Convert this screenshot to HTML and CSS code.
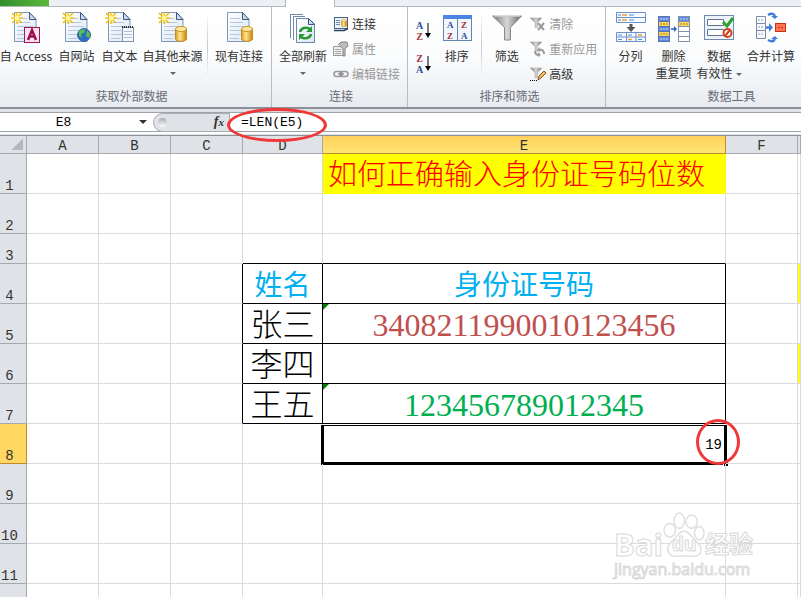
FILE: index.html
```html
<!DOCTYPE html>
<html lang="zh-CN">
<head>
    <meta charset="UTF-8">
    <meta name="viewport" content="width=device-width, initial-scale=1.0">
    <title>Excel</title>
    <link rel="stylesheet" href="styles.css">
</head>
<body>
    <!-- shared icon parts -->
    <svg class="defs" width="0" height="0">
        <defs>
            <linearGradient id="paper" x1="0" y1="0" x2="1" y2="1"><stop offset="0" stop-color="#fff"/><stop offset="1" stop-color="#dbe6f4"/></linearGradient>
            <linearGradient id="gold" x1="0" x2="1"><stop offset="0" stop-color="#d99a1c"/><stop offset=".4" stop-color="#ffe68a"/><stop offset="1" stop-color="#c98208"/></linearGradient>
            <linearGradient id="steel" x1="0" x2="1"><stop offset="0" stop-color="#777"/><stop offset=".5" stop-color="#d8d8d8"/><stop offset="1" stop-color="#666"/></linearGradient>
            <symbol id="page" viewBox="0 0 32 32">
                <path d="M4.5 1.5H19.5L26 8.5V30.5H4.5Z" fill="url(#paper)" stroke="#7f97b8"/>
                <path d="M19.5 1.5V8.5H26Z" fill="#c9dbf2" stroke="#3f5878"/>
                <path d="M7 7.5h10M7 11.5h13M7 15.5h16M7 19.5h16M7 23.5h16M7 27.5h9" stroke="#b4c7e0"/>
            </symbol>
            <symbol id="star" viewBox="0 0 12 12">
                <path d="M6 0v12M0 6h12M1 1l10 10M11 1L1 11" stroke="#f2c200" stroke-width="1.5"/>
                <circle cx="6" cy="6" r="2.5" fill="#fff6a0"/>
            </symbol>
            <symbol id="drum" viewBox="0 0 12 16">
                <path d="M.5 3v10c0 3 11 3 11 0V3Z" fill="url(#gold)" stroke="#c98d1c"/>
                <ellipse cx="6" cy="3" rx="5.5" ry="2.5" fill="#ffeaa0" stroke="#c9962c"/>
            </symbol>
            <symbol id="funnel" viewBox="0 0 30 26">
                <path d="M.5 1.5H29.5L18.5 13V25.5H12.5V13Z" fill="url(#steel)" stroke="#8a8a8a"/>
                <path d="M2 1.5H28" stroke="#eee"/>
            </symbol>
        </defs>
    </svg>

    <nav class="tabs">
        <span class="file-tab"></span>
        <span class="active-tab"></span>
    </nav>

    <div class="ribbon">
        <section class="group group-external">
            <div class="tools">
                <button class="tool access">
                    <svg viewBox="0 0 32 32"><use href="#page"/><use href="#star" x="1" y="1" width="12" height="12"/><rect x="14.5" y="16.5" width="15" height="15" fill="#fbe3ee" stroke="#a4145a"/><path d="M18 29l4-10 4 10M19.5 25.5h5" fill="none" stroke="#9b0f50" stroke-width="2.5"/></svg>
                    <span>自 Access</span>
                </button>
                <button class="tool narrow">
                    <svg viewBox="0 0 32 32"><use href="#page"/><use href="#star" x="1" y="1" width="12" height="12"/><circle cx="23" cy="24" r="6.5" fill="#2b6cc4" stroke="#3d6cac"/><path d="M18 20q4-3 6-1l-1 3-3 1 1 4-3-2ZM26 19l3 4-1 4-3-2Z" fill="#5cc04a"/></svg>
                    <span>自网站</span>
                </button>
                <button class="tool narrow">
                    <svg viewBox="0 0 32 32"><use href="#page"/><use href="#star" x="1" y="1" width="12" height="12"/><rect x="18.5" y="16.5" width="11" height="14" fill="#f5f8fc" stroke="#8190a5"/><path d="M18 16h12" stroke="#333" stroke-width="2" stroke-dasharray="1 1"/><path d="M20 20.5h8M20 23.5h8M20 26.5h8" stroke="#a9bedb"/></svg>
                    <span>自文本</span>
                </button>
                <button class="tool wide">
                    <svg viewBox="0 0 32 32"><use href="#page"/><use href="#star" x="1" y="1" width="12" height="12"/><use href="#drum" x="18" y="15" width="12" height="16"/></svg>
                    <span>自其他来源</span>
                    <i class="arrow"></i>
                </button>
                <span class="divider"></span>
                <button class="tool">
                    <svg viewBox="0 0 32 32"><use href="#page"/><use href="#drum" x="18" y="15" width="12" height="16"/></svg>
                    <span>现有连接</span>
                </button>
            </div>
            <h2>获取外部数据</h2>
        </section>

        <section class="group group-connect">
            <div class="tools">
                <button class="tool">
                    <svg viewBox="0 0 32 32"><path d="M3.5 27V3.5H16" fill="#fff" stroke="#6f87a8"/><path d="M6.5 29V5.500H18" fill="#fff" stroke="#6f87a8"/><path d="M9.5 7.5h12l6 5.5v18.5h-18Z" fill="url(#paper)" stroke="#6f87a8"/><path d="M21.5 7.5v6h6Z" fill="#c9dbf2" stroke="#3f5878"/><path d="M13 21a6 5 0 0 1 10-3M24 23a6 5 0 0 1-10 3" fill="none" stroke="#279a35" stroke-width="2.5"/><path d="M25 15v6h-6ZM12 29v-6h6Z" fill="#279a35"/></svg>
                    <span>全部刷新</span>
                    <i class="arrow"></i>
                </button>
                <div class="small-tools">
                    <button class="small-tool">
                        <svg viewBox="0 0 16 16"><rect x="1.5" y="1.5" width="13" height="11" fill="#eaf2fc" stroke="#466287"/><path d="M3 4.5h4M3 6.5h4M3 8.5h4" stroke="#6b8fc0"/><use href="#drum" x="8" y="3" width="6" height="8"/><path d="M1 14.5h10l4-2" fill="none" stroke="#29405f" stroke-width="1.5"/></svg>
                        连接
                    </button>
                    <button class="small-tool" disabled>
                        <svg viewBox="0 0 16 16"><path d="M.5 5.500h11v9h-11Z" fill="#eee" stroke="#999"/><path d="M2 8.5h6M2 10.5h6M2 12.5h6" stroke="#aaa"/><path d="M5 4l3-3h6l1 4-3 3v7h-2V8L7 5" fill="#bbb" stroke="#888"/></svg>
                        属性
                    </button>
                    <button class="small-tool" disabled>
                        <svg viewBox="0 0 16 16"><rect x="1" y="5.5" width="8" height="5" rx="2.5" fill="none" stroke="#999" stroke-width="1.5"/><rect x="7" y="5.5" width="8" height="5" rx="2.5" fill="none" stroke="#999" stroke-width="1.5"/><path d="M5 8h6" stroke="#777"/></svg>
                        编辑链接
                    </button>
                </div>
            </div>
            <h2>连接</h2>
        </section>

        <section class="group group-sort">
            <div class="tools">
                <div class="order-tools">
                    <button class="order" aria-label="升序">
                        <span class="letters"><b class="blue">A</b><b class="red">Z</b></span>
                        <svg viewBox="0 0 6 16"><path d="M3 0v13" stroke="#000"/><path d="M0 10h6l-3 5Z"/></svg>
                    </button>
                    <button class="order" aria-label="降序">
                        <span class="letters"><b class="red">Z</b><b class="blue">A</b></span>
                        <svg viewBox="0 0 6 16"><path d="M3 0v13" stroke="#000"/><path d="M0 10h6l-3 5Z"/></svg>
                    </button>
                </div>
                <button class="tool narrow">
                    <svg class="letters-icon" viewBox="0 0 32 32"><rect x="2.5" y="4.5" width="28" height="25" fill="#f2f7fd" stroke="#6683ab"/><rect x="2" y="4" width="29" height="4" fill="#4c86e4"/><path d="M16.5 8v21" stroke="#6683ab"/><text x="6" y="17" fill="#2f4d9b">A</text><text x="6" y="28" fill="#a3303b">Z</text><text x="20" y="17" fill="#a3303b">Z</text><text x="20" y="28" fill="#2f4d9b">A</text></svg>
                    <span>排序</span>
                </button>
                <span class="divider"></span>
                <button class="tool narrow">
                    <svg viewBox="0 0 32 32"><use href="#funnel" x="1" y="3" width="30" height="27"/></svg>
                    <span>筛选</span>
                </button>
                <div class="small-tools">
                    <button class="small-tool" disabled>
                        <svg viewBox="0 0 16 16"><use href="#funnel" x="0" y="1" width="12" height="11"/><path d="M8 7l6 7M14 7l-6 7" stroke="#999" stroke-width="2"/></svg>
                        清除
                    </button>
                    <button class="small-tool" disabled>
                        <svg viewBox="0 0 16 16"><use href="#funnel" x="0" y="0" width="12" height="11"/><path d="M5 10q0 4 4 4M14 13q0-5-5-4" fill="none" stroke="#999" stroke-width="2"/><path d="M8 11l3 3-3 2ZM10 6v5l-3-2Z" fill="#999"/></svg>
                        重新应用
                    </button>
                    <button class="small-tool">
                        <svg viewBox="0 0 16 16"><use href="#funnel" x="0" y="1" width="12" height="11"/><path d="M0 14.5h8" stroke="#000" stroke-dasharray="1 1"/><path d="M8 14l1-4 5-5 2 2-5 5Z" fill="#f3c14f" stroke="#8b4f28"/></svg>
                        高级
                    </button>
                </div>
            </div>
            <h2>排序和筛选</h2>
        </section>

        <section class="group group-data">
            <div class="tools">
                <button class="tool narrow">
                    <svg viewBox="0 0 32 32"><path d="M1.5 1.5h29v10h-29ZM1.5 6.5h29M1.5 21.5h29v9h-29ZM1.5 26h29M11.5 21v10M21 21v10" fill="#f7faff" stroke="#6c8fc7"/><path d="M3 4h3M14 4h5M3 9h3M14 9h5M3 24h4M13 24h4M3 28.5h4M23 28.5h4" stroke="#4d8be8"/><path d="M7 4h5M7 9h5M23 24h4M13 28.5h4" stroke="#f29b2c" stroke-width="1.5"/><path d="M14.5 13h3v3h3l-4.5 5-4.5-5h3Z" fill="#555"/></svg>
                    <span>分列</span>
                </button>
                <button class="tool narrow">
                    <svg viewBox="0 0 32 32"><path d="M0 5h12v6H0ZM0 26h12v5H0Z" fill="#6288d9"/><path d="M0 11h12v5H0ZM0 21h12v5H0Z" fill="#ffd75a"/><path d="M0 16h12v5H0Z" fill="#6288d9"/><path d="M.5 5.500h11v25H.5ZM0 10.5h12M0 15.5h12M0 20.5h12M0 25.5h12" fill="none" stroke="#5873ad"/><path d="M2 8h8M2 18h8M2 28h8" stroke="#c9dcff" stroke-dasharray="2 1"/><path d="M2 13h8M2 23h8" stroke="#aa7b18" stroke-dasharray="2 1"/><path d="M13 18h4" stroke="#2d62c4" stroke-width="1.500"/><path d="M16 15l3 3-3 3Z" fill="#2d62c4"/><path d="M20 5h12v6H20Z" fill="#6288d9"/><path d="M20 11h12v5H20Z" fill="#ffd75a"/><path d="M20 16h12v15H20Z" fill="#fff"/><path d="M20.5 5.500h11v25h-11ZM20 10.5h12M20 15.5h12M20 20.5h12M20 25.5h12" fill="none" stroke="#8091b0"/><path d="M22 8h8" stroke="#c9dcff" stroke-dasharray="2 1"/><path d="M22 13h8" stroke="#aa7b18" stroke-dasharray="2 1"/></svg>
                    <span>删除<br>重复项</span>
                </button>
                <button class="tool check-tool">
                    <svg viewBox="0 0 32 32"><rect x="1.5" y="4.5" width="29" height="24" fill="#edf3fb" stroke="#7189ab"/><path d="M4.500 8.500h16v6h-16ZM4.500 18.500h16v6h-16Z" fill="#fff" stroke="#62748e"/><path d="M20 11l4 4 6-8" fill="none" stroke="#2ba32b" stroke-width="3"/><circle cx="24.5" cy="22" r="4" fill="#fff" stroke="#d2411e" stroke-width="2"/><path d="M22 25l5-6" stroke="#d2411e" stroke-width="2"/></svg>
                    <span>数据<br>有效性 <i class="arrow inline"></i></span>
                </button>
                <button class="tool">
                    <svg viewBox="0 0 32 32"><path d="M1.5 5.500h9v22h-9ZM1 12.5h10M1 19.5h10" fill="#f7f9fd" stroke="#7d8ca6"/><path d="M3 9h6M3 16h6M3 23h6" stroke="#98a5bc" stroke-dasharray="2 1"/><path d="M13 4q5-3 7 1M13 29q5 3 7-1M11 16.5h4" fill="none" stroke="#3f7fdb" stroke-width="2.5"/><path d="M16 5h7l-3 3ZM16 28h7l-3-3ZM14 12l4 4.5-4 4.5Z" fill="#3f7fdb"/><rect x="20.5" y="12.5" width="10" height="8" fill="#ff7350" stroke="#c53417"/><path d="M23 16.5h6" stroke="#c53417" stroke-dasharray="2 1"/></svg>
                    <span>合并计算</span>
                </button>
            </div>
            <h2>数据工具</h2>
        </section>
    </div>

    <div class="formula-bar">
        <input class="name-box" type="text" value="E8" aria-label="名称框">
        <i class="arrow dark"></i>
        <div class="fx"><span class="knob"></span><span class="fx-label">f<small>x</small></span></div>
        <div class="formula">
            <input type="text" value="=LEN(E5)" aria-label="编辑栏">
            <span class="mark mark-formula"></span>
        </div>
    </div>

    <main class="sheet">
        <table>
            <colgroup>
                <col class="col-head"><col class="col-std"><col class="col-std"><col class="col-std"><col class="col-name"><col class="col-id"><col class="col-std"><col>
            </colgroup>
            <thead>
                <tr><th class="corner"></th><th>A</th><th>B</th><th>C</th><th>D</th><th class="current">E</th><th>F</th><th></th></tr>
            </thead>
            <tbody>
                <tr><th>1</th><td></td><td></td><td></td><td></td><td class="title">如何正确输入身份证号码位数</td><td></td><td></td></tr>
                <tr><th>2</th><td></td><td></td><td></td><td></td><td></td><td></td><td></td></tr>
                <tr class="short"><th>3</th><td></td><td></td><td></td><td class="edge"></td><td class="edge"></td><td></td><td></td></tr>
                <tr><th>4</th><td></td><td></td><td class="line"></td><td class="box label">姓名</td><td class="box label">身份证号码</td><td></td><td class="yellow"></td></tr>
                <tr><th>5</th><td></td><td></td><td class="line"></td><td class="box name">张三</td><td class="box id red-id flag">3408211990010123456</td><td></td><td></td></tr>
                <tr><th>6</th><td></td><td></td><td class="line"></td><td class="box name">李四</td><td class="box"></td><td></td><td class="yellow"></td></tr>
                <tr><th>7</th><td></td><td></td><td class="line"></td><td class="box name">王五</td><td class="box id green-id flag">123456789012345</td><td></td><td></td></tr>
                <tr><th class="current">8</th><td></td><td></td><td></td><td></td><td class="selected">19<span class="handle"></span><span class="mark mark-count"></span></td><td></td><td></td></tr>
                <tr><th>9</th><td></td><td></td><td></td><td></td><td></td><td></td><td></td></tr>
                <tr><th>10</th><td></td><td></td><td></td><td></td><td></td><td></td><td></td></tr>
                <tr><th>11</th><td></td><td></td><td></td><td></td><td></td><td></td><td></td></tr>
                <tr><th></th><td></td><td></td><td></td><td></td><td></td><td></td><td></td></tr>
            </tbody>
        </table>
        <div class="watermark">
            <div class="brand">
                <span>Bai</span>
                <span class="paw">
                    <svg viewBox="0 0 44 48"><g fill="#fff" stroke="#dcdcdc" stroke-width="1.5"><ellipse cx="7" cy="19" rx="6" ry="7"/><ellipse cx="17" cy="9" rx="5.5" ry="8"/><ellipse cx="30" cy="10" rx="6" ry="7"/><ellipse cx="38" cy="22" rx="5" ry="7"/><path d="M22 20c6 0 8 6 12 10 5 4 8 8 5 13-3 5-9 3-17 3s-13 2-16-3c-3-6 0-9 4-13 5-4 6-10 12-10Z"/></g></svg>
                    <span class="du">du</span>
                </span>
                <span class="jy">经验</span>
            </div>
            <div class="site">jingyan.baidu.com</div>
        </div>
    </main>
</body>
</html>
```
FILE: styles.css
```css
* {
    box-sizing: border-box;
}

body {
    margin: 0;
    height: 100vh;
    display: flex;
    flex-direction: column;
    overflow: hidden;
    background-color: #fff;
    font-family: "Noto Sans", "Noto Sans CJK SC", sans-serif;
    font-size: 12px;
    color: #333;
}

button {
    border: none;
    background: none;
    padding: 0;
    font: inherit;
    color: inherit;
}

.defs {
    position: absolute;
}

/* tab strip */
.tabs {
    display: flex;
    flex: none;
    height: 7px;
    background-color: #eceff3;
    border-bottom: 1px solid #b3b8be;
}

.file-tab {
    width: 49px;
    height: 6px;
    background: linear-gradient(90deg, #2f8f2c, #5cb83a);
}

.active-tab {
    width: 50px;
    height: 7px;
    margin-left: 236px;
    background-color: #fff;
    border: 1px solid #b3b8be;
    border-width: 0 1px;
}

/* ribbon */
.ribbon {
    display: flex;
    flex: none;
    height: 102px;
    overflow: hidden;
    background: linear-gradient(#fff, #fbfcfd 50%, #e8ebef);
    border-bottom: 2px solid #8c9198;
}

.group {
    display: flex;
    flex: none;
    flex-direction: column;
    border-right: 1px solid #b9bdc3;
}

.group-external {
    width: 280px;
    margin-left: -8px;
}

.group-connect {
    width: 136px;
    padding-left: 3px;
}

.group-sort {
    width: 198px;
    padding-left: 6px;
}

.group-data {
    flex: 1 0 248px;
    padding-left: 3px;
    border-right: none;
}

.group h2 {
    margin: 0;
    font-size: 12px;
    font-weight: 400;
    line-height: 20px;
    text-align: center;
    color: #666c76;
}

.tools {
    display: flex;
    height: 81px;
    padding-top: 4px;
}

.tool {
    display: flex;
    flex: none;
    flex-direction: column;
    align-items: center;
    width: 56px;
    line-height: 17px;
    white-space: nowrap;
}

.tool svg {
    width: 32px;
    height: 32px;
    margin-bottom: 5px;
}

.narrow {
    width: 43px;
}

.wide {
    width: 63px;
}

.access {
    width: 58px;
    margin-left: 5px;
}

.check-tool {
    width: 48px;
}

.divider {
    flex: none;
    width: 1px;
    height: 70px;
    margin: 0 3px;
    background: linear-gradient(#fff, #c4c8cd, #fff);
}

.arrow {
    width: 0;
    height: 0;
    border: 3px solid transparent;
    border-top-color: #666;
    border-bottom: none;
}

.tool > .arrow {
    margin-top: 7px;
}

.inline {
    display: inline-block;
    vertical-align: middle;
}

.small-tools {
    display: flex;
    flex-direction: column;
    padding-left: 2px;
}

.small-tool {
    display: flex;
    align-items: center;
    gap: 3px;
    height: 25px;
    white-space: nowrap;
}

.small-tool svg {
    width: 16px;
    height: 16px;
}

.small-tool:disabled {
    color: #999;
}

.order-tools {
    display: flex;
    flex-direction: column;
    gap: 11px;
    padding: 9px 4px 0 2px;
}

.order {
    display: flex;
    align-items: center;
    gap: 2px;
}

.order svg {
    width: 6px;
    height: 16px;
}

.letters {
    display: flex;
    flex-direction: column;
    font: 10px/11px "Liberation Serif", serif;
}

.letters-icon {
    font: bold 9px "Liberation Serif", serif;
}

.blue {
    color: #2f4d9b;
}

.red {
    color: #a3303b;
}

/* formula bar */
.formula-bar {
    display: flex;
    flex: none;
    align-items: center;
    height: 27px;
    background: linear-gradient(#dfe2e7 3px, #a0a4aa 3px, #a0a4aa 4px, #fff 4px, #fff 22px, #a0a4aa 22px, #a0a4aa 23px, #fff 23px, #fff 25px, #dfe2e7 25px);
    border-bottom: 1px solid #8c9198;
}

.formula-bar input {
    height: 18px;
    padding: 1px 0 0;
    border: none;
    background: none;
    color: #000;
    font: 13px "Liberation Mono", monospace;
}

.name-box {
    width: 127px;
    text-align: center;
}

.dark {
    margin: 0 6px 0 12px;
    border-width: 4px;
    border-bottom: none;
    border-top-color: #333;
}

.fx {
    display: flex;
    justify-content: space-between;
    align-items: center;
    width: 77px;
    height: 19px;
    padding: 0 5px 0 4px;
    background-color: #dfe2e7;
    border: 1px solid #a9adb3;
    border-radius: 10px 0 0 10px;
}

.knob {
    width: 9px;
    height: 9px;
    border-radius: 50%;
    background: linear-gradient(#a9abb0, #fff);
}

.fx-label {
    font: italic bold 14px "Liberation Serif", serif;
}

.fx-label small {
    font-size: 11px;
}

.formula {
    position: relative;
    flex: 1;
    padding-left: 11px;
}

.formula input {
    width: 100%;
}

/* red annotation rings */
.mark {
    position: absolute;
    z-index: 2;
    border: 3px solid #f03838;
    border-radius: 50%;
}

.mark-formula {
    left: -3px;
    top: -5px;
    width: 100px;
    height: 34px;
}

.mark-count {
    right: -15px;
    top: -5px;
    width: 44px;
    height: 46px;
}

/* sheet */
.sheet {
    position: relative;
    flex: 1;
    min-height: 0;
    overflow: hidden;
}

table {
    width: 100%;
    table-layout: fixed;
    border-collapse: separate;
    border-spacing: 0;
}

.col-head {
    width: 27px;
}

.col-std {
    width: 72px;
}

.col-name {
    width: 80px;
}

.col-id {
    width: 403px;
}

th {
    padding: 0;
    background-color: #dfe3e8;
    border: 1px solid #a5a9ae;
    border-width: 0 1px 1px 0;
    font: 14px/14px "Liberation Mono", monospace;
    color: #333;
}

thead th {
    height: 18px;
    padding-top: 2px;
}

tbody th {
    height: 40px;
    padding-right: 7px;
    vertical-align: bottom;
}

.corner {
    background: linear-gradient(135deg, transparent 50%, #b4b8bd 50%) 12px 3px / 11px 11px no-repeat #dfe3e8;
}

.current {
    background: #ffd862;
    border-color: #c48a2c;
}

thead .current {
    background: linear-gradient(#ffd05c, #ffe574);
}

td {
    position: relative;
    height: 40px;
    padding: 0;
    border: 1px solid #dadbdc;
    border-width: 0 1px 1px 0;
    text-align: center;
    white-space: nowrap;
    font-family: "Liberation Serif", "Noto Sans CJK SC", serif;
    line-height: 35px;
}

.short th,
.short td {
    height: 30px;
    line-height: 14px;
}

.edge {
    border-bottom-color: #000;
}

.line {
    border-right-color: #000;
}

.box {
    padding-top: 4px;
    border-color: #000;
}

.title {
    padding: 4px 0 0 5px;
    background-color: #ff0;
    border-color: #ff0;
    text-align: left;
    font-size: 29px;
    font-weight: 300;
    color: #f00;
}

.label {
    font-size: 28px;
    font-weight: 400;
    color: #00b0f0;
}

.name {
    font-size: 32px;
    font-weight: 300;
    color: #000;
}

.id {
    font-size: 32px;
}

.red-id {
    color: #c0504d;
}

.green-id {
    color: #00b050;
}

.flag::before {
    content: "";
    position: absolute;
    left: 0;
    top: 0;
    border: 3px solid #008000;
    border-right-color: transparent;
    border-bottom-color: transparent;
}

.yellow {
    background-color: #ff0;
}

.selected {
    padding: 2px 3px 0 0;
    text-align: right;
    font: 14px "Liberation Mono", monospace;
    color: #000;
}

/* thin double line on top, thick on the other sides */
.selected::before {
    content: "";
    position: absolute;
    inset: 1px -2px -2px -2px;
    border: 3px solid #000;
    border-top-width: 1px;
}

.handle {
    position: absolute;
    right: -3px;
    bottom: -3px;
    width: 5px;
    height: 5px;
    background-color: #000;
    border: 1px solid #fff;
    border-width: 1px 0 0 1px;
}

/* watermark */
.watermark {
    position: absolute;
    right: 43px;
    bottom: 17px;
    width: 144px;
    opacity: 0.9;
    color: #fff;
    font-family: "Open Sans", "Noto Sans CJK SC", sans-serif;
    -webkit-text-stroke: 1px #d6d6d6;
}

.brand {
    display: flex;
    align-items: flex-end;
    font-size: 31px;
    font-weight: 700;
    line-height: 28px;
}

.paw {
    position: relative;
    width: 42px;
    height: 46px;
}

.paw svg {
    width: 42px;
    height: 46px;
}

.du {
    position: absolute;
    left: 9px;
    bottom: 0;
    font-size: 19px;
}

.jy {
    font-size: 24px;
}

.site {
    font-size: 16px;
    line-height: 22px;
}
```
